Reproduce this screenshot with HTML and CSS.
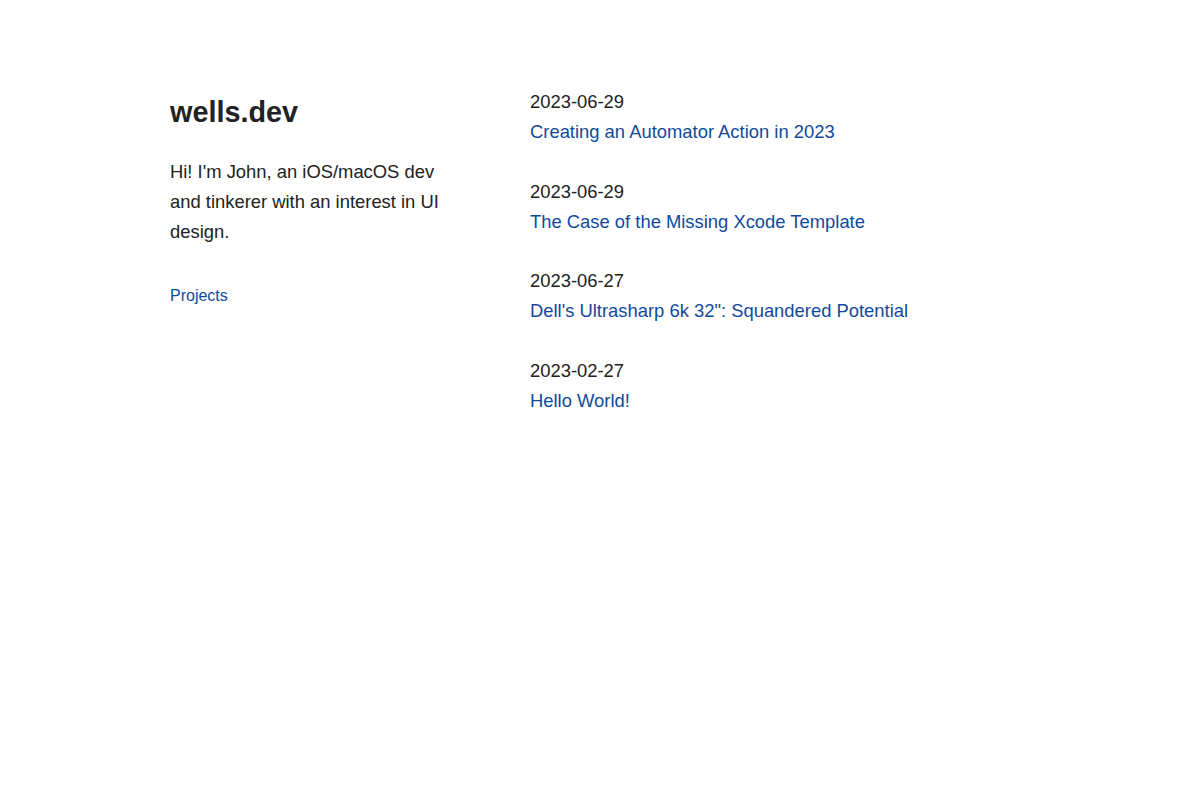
FILE: index.html
```html
<!DOCTYPE html>
<html lang="en">
<head>
  <meta charset="UTF-8"/>
  <meta name="viewport" content="width=device-width,initial-scale=1.0"/>
  <title>wells.dev</title>
  <link rel="stylesheet" href="styles.css">
</head>
<body>
  <div class="page">
    <aside class="intro">
      <h1>wells.dev</h1>
      <p>Hi! I'm John, an iOS/macOS dev and tinkerer with an interest in UI design.</p>
      <nav>
        <a href="#">Projects</a>
      </nav>
    </aside>

    <main class="posts">
      <article class="post">
        <div class="date">2023-06-29</div>
        <a href="#">Creating an Automator Action in 2023</a>
      </article>
      <article class="post">
        <div class="date">2023-06-29</div>
        <a href="#">The Case of the Missing Xcode Template</a>
      </article>
      <article class="post">
        <div class="date">2023-06-27</div>
        <a href="#">Dell's Ultrasharp 6k 32": Squandered Potential</a>
      </article>
      <article class="post">
        <div class="date">2023-02-27</div>
        <a href="#">Hello World!</a>
      </article>
    </main>
  </div>
</body>
</html>
```

FILE: styles.css
```css
/* ===== Global ===== */
* { margin: 0; padding: 0; box-sizing: border-box; }
body {
  font-family: 'Liberation Sans', Arial, sans-serif;
  font-size: 18.4px;
  line-height: 30px;
  color: #222;
  background: #fff;
}
a { color: #114a9c; text-decoration: none; }

/* ===== Layout ===== */
.page {
  width: 860px;
  margin: 0 auto;
  padding-top: 87px;
  display: flex;
  gap: 75px;
}

/* ===== Intro column ===== */
.intro { width: 285px; flex-shrink: 0; }
.intro h1 {
  font-size: 28.8px;
  line-height: 51.5px;
  font-weight: 700;
  margin-bottom: 18px;
}
.intro p { margin-bottom: 33px; }
.intro nav a { font-size: 16px; }

/* ===== Posts ===== */
.posts { flex: 1; }
.post { margin-bottom: 29.6px; }
.post .date { display: block; }
.post a { display: block; }
```
